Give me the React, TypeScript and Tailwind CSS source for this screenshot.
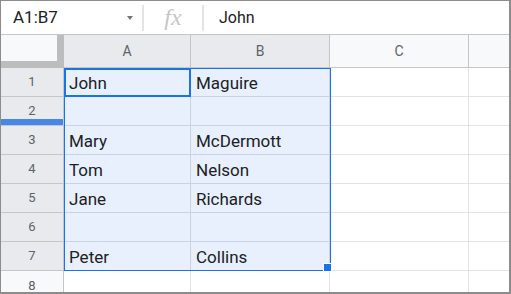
const rows: [string, string][] = [
  ['John', 'Maguire'],
  ['', ''],
  ['Mary', 'McDermott'],
  ['Tom', 'Nelson'],
  ['Jane', 'Richards'],
  ['', ''],
  ['Peter', 'Collins'],
];

export default function App() {
  return (
    <div
      className="relative w-[511px] h-[294px] overflow-hidden bg-white border-l border-t border-r-2 border-b-2 border-[#8c8c8c] text-[#202124]"
      style={{ fontFamily: 'Roboto, Arial, sans-serif' }}
    >
      {/* Formula bar */}
      <div className="flex items-center h-[34px] border-b border-[#c4c7c5]">
        <div className="flex items-center w-[141px] h-full pl-[12px] pr-[9px]">
          <span className="text-[17px] leading-none">A1:B7</span>
          <span className="ml-auto w-0 h-0 border-l-[3px] border-r-[3px] border-t-[4px] border-l-transparent border-r-transparent border-t-[#757575]" />
        </div>
        <div className="w-[2px] h-[26px] bg-[#e3e3e3]" />
        <div className="w-[58px] flex justify-center">
          <span
            className="text-[24px] italic leading-none text-[#c4c7c5] -mt-[2px]"
            style={{ fontFamily: '"Liberation Serif", serif' }}
          >
            fx
          </span>
        </div>
        <div className="w-[2px] h-[26px] bg-[#e3e3e3]" />
        <span className="pl-[15px] text-[16px] leading-none">John</span>
      </div>

      {/* Column headers */}
      <div className="flex h-[33px] text-[14px] text-[#5f6368]">
        <div className="w-[63px] shrink-0 bg-[#f8f9fa] border-r-[7px] border-b-[7px] border-[#bdbdbd]" />
        <div className="w-[127px] shrink-0 flex items-center justify-center bg-[#e8eaed] border-r border-b border-[#c4c7c5]">A</div>
        <div className="w-[139px] shrink-0 flex items-center justify-center bg-[#e8eaed] border-r border-b border-[#c4c7c5]">B</div>
        <div className="w-[139px] shrink-0 flex items-center justify-center bg-[#f8f9fa] border-r border-b border-[#c4c7c5]">C</div>
        <div className="flex-1 bg-[#f8f9fa] border-b border-[#c4c7c5]" />
      </div>

      {/* Rows */}
      {rows.map(([a, b], i) => (
        <div key={i} className="flex h-[29px] text-[17px]">
          <div className="relative w-[63px] shrink-0 flex items-center justify-center text-[13px] text-[#5f6368] bg-[#e8eaed] border-r border-b border-[#c4c7c5]">
            {i + 1}
            {i === 1 && <div className="absolute left-0 right-0 bottom-0 h-[6px] bg-[#4a86e8]" />}
          </div>
          <div className="w-[127px] shrink-0 flex items-center pl-[5px] pt-[3px] bg-[#e8f0fe] border-r border-b border-[#c9d3e3]">{a}</div>
          <div className="w-[139px] shrink-0 flex items-center pl-[5px] pt-[3px] bg-[#e8f0fe] border-r border-b border-[#c9d3e3]">{b}</div>
          <div className="w-[139px] shrink-0 border-r border-b border-[#e2e3e3]" />
          <div className="flex-1 border-b border-[#e2e3e3]" />
        </div>
      ))}
      <div className="flex h-[29px]">
        <div className="w-[63px] shrink-0 flex items-center justify-center text-[13px] text-[#5f6368] bg-[#f8f9fa] border-r border-[#c4c7c5]">8</div>
        <div className="w-[127px] shrink-0 border-r border-[#e2e3e3]" />
        <div className="w-[139px] shrink-0 border-r border-[#e2e3e3]" />
        <div className="w-[139px] shrink-0 border-r border-[#e2e3e3]" />
        <div className="flex-1" />
      </div>

      {/* Selection overlays */}
      <div className="absolute left-[63px] top-[67px] w-[267px] h-[203px] border border-[#1a73e8] pointer-events-none" />
      <div className="absolute left-[63px] top-[67px] w-[127px] h-[29px] border-2 border-[#1a73e8] pointer-events-none" />
      <div className="absolute left-[322px] top-[262px] w-[9px] h-[9px] bg-[#1a73e8] border border-white" />
    </div>
  );
}
